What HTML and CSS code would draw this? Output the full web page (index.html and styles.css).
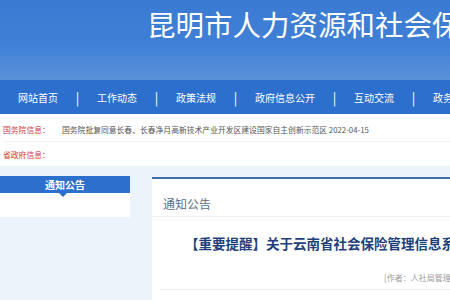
FILE: index.html
```html
<!DOCTYPE html>
<html lang="zh-CN">
    <head>
        <meta charset="utf-8">
        <title>昆明市人力资源和社会保障局</title>
        <link rel="stylesheet" href="styles.css">
    </head>
    <body>
        <div class="header">
            <h1>昆明市人力资源和社会保障局</h1>
        </div>
        <div class="nav">
            <a href="#">网站首页</a><span class="sep">|</span>
            <a href="#">工作动态</a><span class="sep">|</span>
            <a href="#">政策法规</a><span class="sep">|</span>
            <a href="#">政府信息公开</a><span class="sep">|</span>
            <a href="#">互动交流</a><span class="sep">|</span>
            <a href="#">政务服务</a>
        </div>
        <div class="notice">
            <div class="row">
                <span class="label">国务院信息：</span>
                <span class="text">国务院批复同意长春、长春净月高新技术产业开发区建设国家自主创新示范区 2022-04-15</span>
            </div>
            <div class="row">
                <span class="label">省政府信息：</span>
            </div>
        </div>
        <div class="main">
            <div class="side">
                <div class="side-title">通知公告</div>
                <div class="side-body"></div>
            </div>
            <div class="content">
                <div class="crumb">通知公告</div>
                <h3>【重要提醒】关于云南省社会保险管理信息系统升级的公告</h3>
                <div class="author">[作者：人社局管理员]</div>
            </div>
        </div>
    </body>
</html>
```

FILE: styles.css
```css
* {
    margin: 0;
    padding: 0;
}
html, body {
    overflow: hidden;
}
body {
    width: 700px;
    height: 300px;
    background: #edf3fa;
    font-family: "Noto Sans CJK SC", "Liberation Sans", sans-serif;
}
a {
    text-decoration: none;
}
.header {
    height: 80px;
    background: linear-gradient(180deg, #3b7ad2 0%, #3f80d6 55%, #5a91d8 100%);
}
.header h1 {
    padding: 4px 0 0 147px;
    color: #fff;
    font-size: 28.5px;
    font-weight: 400;
    line-height: 40px;
    white-space: nowrap;
}
.nav {
    display: flex;
    align-items: center;
    height: 34px;
    padding-left: 18px;
    background: #2c6fcc;
    white-space: nowrap;
}
.nav a {
    color: #fff;
    font-size: 10px;
}
.nav .sep {
    width: 39px;
    color: #fff;
    font-size: 13px;
    text-align: center;
}
.notice {
    height: 52px;
    background: #fff;
    padding: 3px 0 0 3px;
    box-sizing: border-box;
}
.notice .row {
    display: flex;
    height: 24px;
    align-items: center;
    font-size: 7.8px;
    white-space: nowrap;
}
.notice .row + .row {
    border-top: 1px solid #f0f3f7;
}
.notice .label {
    width: 59px;
    color: #d23b3b;
}
.notice .text {
    color: #555;
}
.main {
    display: flex;
    align-items: flex-start;
    padding-top: 10px;
}
.side {
    width: 130px;
}
.side-title {
    position: relative;
    height: 17px;
    background: #2c6fcc;
    color: #fff;
    font-size: 10px;
    font-weight: 700;
    line-height: 17px;
    text-align: center;
}
.side-title::after {
    content: "";
    position: absolute;
    left: 59px;
    bottom: -4px;
    border-left: 4px solid transparent;
    border-right: 4px solid transparent;
    border-top: 4px solid #2c6fcc;
}
.side-body {
    height: 24px;
    background: #fff;
}
.content {
    flex: 1;
    margin: 1px 0 0 22px;
    height: 130px;
    background: #fff;
    border-top: 2px solid #3d6fa8;
    white-space: nowrap;
}
.crumb {
    height: 38px;
    box-sizing: border-box;
    padding: 16px 0 0 11px;
    border-bottom: 1px solid #eef0f3;
    color: #5b6f8a;
    font-size: 12px;
    line-height: 17px;
}
.content h3 {
    margin: 17px 0 0 33px;
    color: #1e3f7a;
    font-size: 13.5px;
    font-weight: 700;
    line-height: 18px;
}
.author {
    margin: 20px 0 0 8px;
    padding: 0 0 6px 224px;
    border-bottom: 1px solid #eef0f3;
    color: #999;
    font-size: 8px;
}
```
